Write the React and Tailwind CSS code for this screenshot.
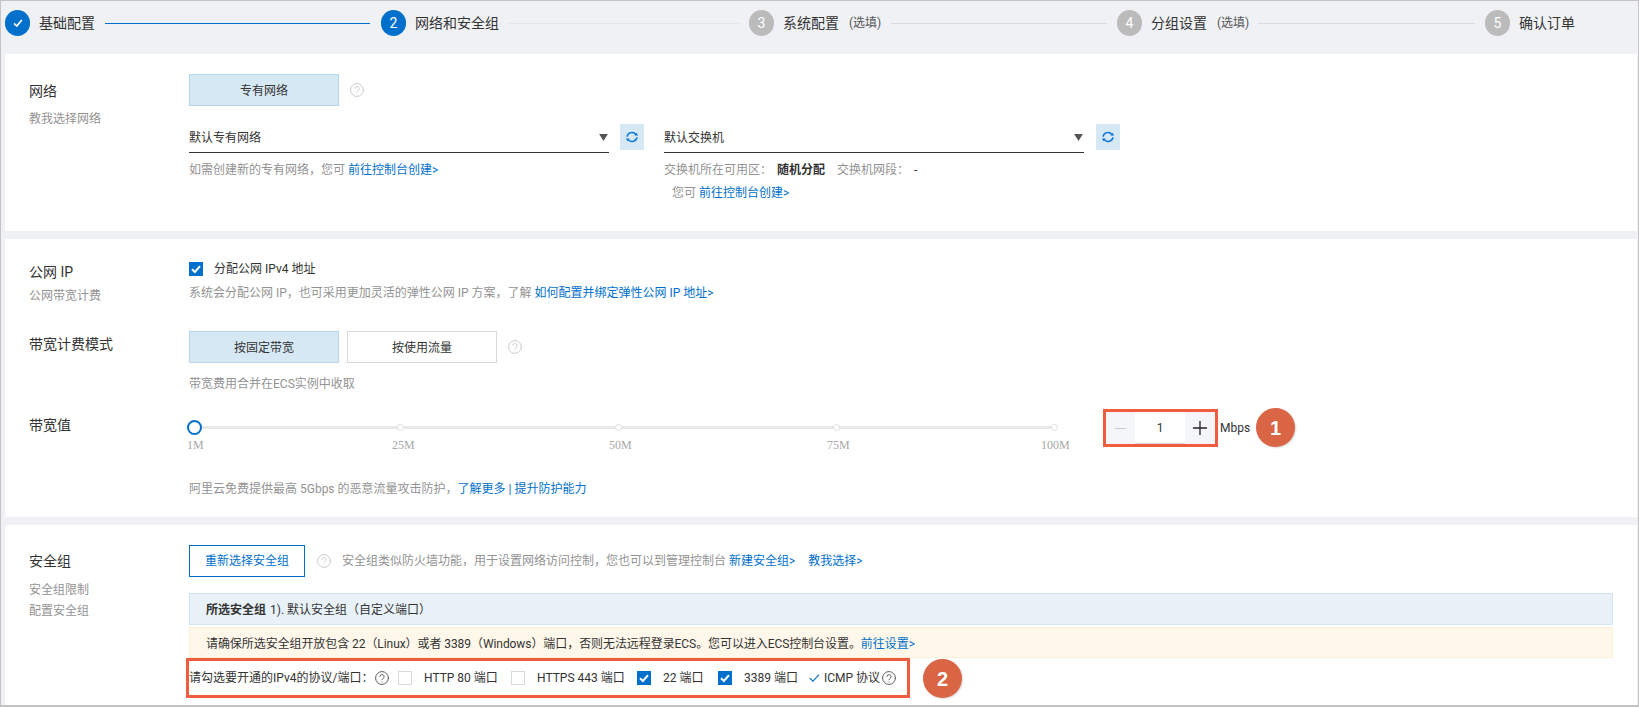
import React from "react";

const FONT = 'font-["Roboto","Noto_Sans_CJK_SC",sans-serif]';

function Help({ className = "text-[#c8c8c8]" }) {
  return (
    <svg viewBox="0 0 24 24" width="14" height="14" fill="none" stroke="currentColor" strokeWidth="1.6" strokeLinecap="round" strokeLinejoin="round" className={`block shrink-0 ${className}`}>
      <circle cx="12" cy="12" r="11" />
      <path d="M8.4 9.2a3.6 3.6 0 0 1 7.2 1c0 2.4-3.6 2.8-3.6 4.8" />
      <path d="M12 18.6h.01" />
    </svg>
  );
}

function Refresh() {
  return (
    <button className="flex h-[26px] w-[24px] shrink-0 items-center justify-center bg-[#d7e8f5]">
      <svg viewBox="0 0 14 14" width="14" height="14" fill="none" stroke="#0b75d8" strokeWidth="1.5">
        <path d="M2 6.6A5 5 0 0 1 11 4.6" />
        <path d="M12 7.4A5 5 0 0 1 3 9.4" />
        <path d="M9.3 5.6H13.2L11.4 2.8Z" fill="#0b75d8" stroke="none" />
        <path d="M0.8 8.4H4.7L2.6 11.2Z" fill="#0b75d8" stroke="none" />
      </svg>
    </button>
  );
}

function Check({ checked }) {
  return checked ? (
    <span className="flex h-[14px] w-[14px] shrink-0 items-center justify-center bg-[#0070cc]">
      <svg viewBox="0 0 14 14" width="14" height="14" fill="none" stroke="#fff" strokeWidth="2">
        <path d="M3 7.2 5.9 10 11 4.2" />
      </svg>
    </span>
  ) : (
    <span className="block h-[14px] w-[14px] shrink-0 border border-[#d9d9d9] bg-white" />
  );
}

function Step({ n, label, opt, state, lineClass, lineW, labelW }) {
  const circle = state === "gray" ? "bg-[#bbbbbb]" : "bg-[#0070cc]";
  return (
    <div className="flex shrink-0 items-center">
      <div className={`flex h-[26px] w-[25px] shrink-0 items-center justify-center rounded-full text-[14px] text-white ${circle}`}>
        {state === "done" ? (
          <svg viewBox="0 0 14 14" width="14" height="14" fill="none" stroke="#fff" strokeWidth="1.7">
            <path d="M3 7.4 5.8 10 10.8 4" />
          </svg>
        ) : (
          n
        )}
      </div>
      <div className={`ml-[9px] flex items-center text-[14px] text-[#333] ${labelW}`}>
        <span className="whitespace-nowrap">{label}</span>
        {opt && <span className="ml-[10px] whitespace-nowrap text-[12px] text-[#555]">(选填)</span>}
      </div>
      {lineW && <div className={`h-px ${lineW} ${lineClass}`} />}
    </div>
  );
}

function Label({ title, subs = [], top = "mt-0" }) {
  return (
    <div className={`w-[160px] shrink-0 ${top}`}>
      <div className="text-[14px] leading-[24px] text-[#333]">{title}</div>
      {subs.length > 0 && (
        <div className="mt-[3px] first:mt-0">
          {subs.map((s, i) => (
            <div key={s} className={`text-[12px] leading-[18px] text-[#939393] ${i ? "mt-[3px]" : ""}`}>{s}</div>
          ))}
        </div>
      )}
    </div>
  );
}

function ChoiceBtn({ active, children }) {
  return (
    <button className={`flex h-[32px] w-[150px] items-center justify-center border pt-px text-[12px] text-[#333] ${active ? "border-[#b6d5ee] bg-[#d7e8f5]" : "border-[#d9d9d9] bg-white"}`}>
      {children}
    </button>
  );
}

function Select({ text, w }) {
  return (
    <div className={`flex h-[29px] ${w} shrink-0 items-start justify-between border-b-[1.5px] border-[#333] pt-[5px] text-[12px] leading-[18px] text-[#333]`}>
      <span>{text}</span>
      <svg viewBox="0 0 10 8" width="9" height="7" className="mr-px mt-[5px]"><path d="M0 0h10L5 8Z" fill="#555" /></svg>
    </div>
  );
}

function Badge({ children, className = "" }) {
  return (
    <div className={`flex h-[39px] w-[39px] shrink-0 items-center justify-center rounded-full bg-[#d96545] font-['Liberation_Sans',sans-serif] text-[20px] font-bold text-white shadow-[1px_1px_2px_rgba(0,0,0,0.15)] ${className}`}>
      {children}
    </div>
  );
}

const A = ({ children, className = "" }) => <a className={`text-[#0070cc] ${className}`}>{children}</a>;

function Slider() {
  const marks = [
    { t: "1M", w: "w-[205px]" },
    { t: "25M", w: "w-[217px]" },
    { t: "50M", w: "w-[218px]" },
    { t: "75M", w: "w-[214px]" },
    { t: "100M", w: "w-[32px]" },
  ];
  return (
    <div className="w-[914px] shrink-0 pt-[13px]">
      <div className="relative h-[15px] w-[872px]">
        <div className="absolute left-[6px] top-[5px] h-[3px] w-[860px] bg-[#e8e8e8]" />
        <div className="absolute -left-[2px] -top-px h-[15px] w-[15px] rounded-full border-2 border-[#0070cc] bg-white" />
        <div className="absolute left-[208px] top-[3px] h-[7px] w-[7px] rounded-full border border-[#dedede] bg-white" />
        <div className="absolute left-[426px] top-[3px] h-[7px] w-[7px] rounded-full border border-[#dedede] bg-white" />
        <div className="absolute left-[644px] top-[3px] h-[7px] w-[7px] rounded-full border border-[#dedede] bg-white" />
        <div className="absolute left-[862px] top-[3px] h-[7px] w-[7px] rounded-full border border-[#dedede] bg-white" />
      </div>
      <div className="mt-px flex font-['Liberation_Serif',serif] text-[12px] leading-[16px] text-[#a8a8a8] -ml-[2px]">
        {marks.map((m) => (
          <span key={m.t} className={`${m.w} shrink-0 whitespace-nowrap`}>{m.t}</span>
        ))}
      </div>
    </div>
  );
}

function Stepper() {
  return (
    <div className="mt-px flex h-[38px] w-[115px] shrink-0 border-[3px] border-[#f05c3e]">
      <div className="flex w-[29px] items-center justify-center bg-[#f5f6fa]">
        <span className="h-px w-[11px] bg-[#c9c9c9]" />
      </div>
      <div className="flex w-[50px] items-center justify-center border-b border-[#d9d9d9] text-[12px] text-[#333]">1</div>
      <div className="relative flex w-[30px] items-center justify-center bg-[#f5f6fa]">
        <svg viewBox="0 0 14 14" width="14" height="14" stroke="#222" strokeWidth="1.3"><path d="M7 0v14M0 7h14" /></svg>
      </div>
    </div>
  );
}

export default function App() {
  return (
    <div className={`h-[707px] w-[1639px] overflow-hidden border-x border-t border-b-2 border-[#c4c4c4] bg-[#eff1f5] ${FONT}`}>
      {/* steps */}
      <div className="flex h-[53px] items-start pl-[4px] pt-[9px]">
        <Step n="1" label="基础配置" state="done" labelW="w-[66px]" lineW="w-[265px]" lineClass="bg-[#0070cc]" />
        <div className="w-[11px]" />
        <Step n="2" label="网络和安全组" state="active" labelW="w-[94px]" lineW="w-[230px]" lineClass="bg-[#e3e5ea]" />
        <div className="w-[10px]" />
        <Step n="3" label="系统配置" opt state="gray" labelW="w-[108px]" lineW="w-[216px]" lineClass="bg-[#d9dbe0]" />
        <div className="w-[10px]" />
        <Step n="4" label="分组设置" opt state="gray" labelW="w-[107px]" lineW="w-[217px]" lineClass="bg-[#d9dbe0]" />
        <div className="w-[10px]" />
        <Step n="5" label="确认订单" state="gray" labelW="w-[66px]" />
      </div>

      {/* network */}
      <section className="ml-[4px] mr-px flex h-[177px] bg-white pl-[24px] pt-[20px]">
        <div className="w-[160px] shrink-0 pt-[5px]">
          <div className="text-[14px] leading-[24px] text-[#333]">网络</div>
          <div className="mt-[7px] text-[12px] leading-[18px] text-[#939393]">教我选择网络</div>
        </div>
        <div>
          <div className="flex items-center">
            <ChoiceBtn active>专有网络</ChoiceBtn>
            <span className="ml-[11px]"><Help /></span>
          </div>
          <div className="mt-[18px] flex items-start">
            <div className="w-[475px] shrink-0">
              <div className="flex items-start">
                <Select text="默认专有网络" w="w-[420px]" />
                <span className="ml-[11px]"><Refresh /></span>
              </div>
              <div className="mt-[8px] text-[12px] leading-[18px] text-[#939393]">
                如需创建新的专有网络，您可 <A>前往控制台创建&gt;</A>
              </div>
            </div>
            <div>
              <div className="flex items-start">
                <Select text="默认交换机" w="w-[420px]" />
                <span className="ml-[12px]"><Refresh /></span>
              </div>
              <div className="mt-[8px] flex text-[12px] leading-[18px] text-[#939393]">
                <span className="w-[113px]">交换机所在可用区：</span>
                <span className="w-[60px] font-bold text-[#333]">随机分配</span>
                <span className="w-[77px]">交换机网段：</span>
                <span className="text-[#333]">-</span>
              </div>
              <div className="ml-[8px] mt-[5px] text-[12px] leading-[18px] text-[#939393]">
                您可 <A>前往控制台创建&gt;</A>
              </div>
            </div>
          </div>
        </div>
      </section>

      {/* public ip */}
      <section className="ml-[4px] mr-px mt-[8px] h-[278px] bg-white pl-[24px] pt-[21px]">
        <div className="flex h-[45px]">
          <Label title="公网 IP" subs={["公网带宽计费"]} />
          <div>
            <div className="flex h-[18px] items-center">
              <Check checked />
              <span className="ml-[11px] text-[12px] text-[#333]">分配公网 IPv4 地址</span>
            </div>
            <div className="mt-[6px] text-[12px] leading-[18px] text-[#939393]">
              系统会分配公网 IP，也可采用更加灵活的弹性公网 IP 方案，了解 <A>如何配置并绑定弹性公网 IP 地址&gt;</A>
            </div>
          </div>
        </div>
        <div className="mt-[26px] flex">
          <Label title="带宽计费模式" top="mt-px" />
          <div>
            <div className="flex items-center">
              <ChoiceBtn active>按固定带宽</ChoiceBtn>
              <span className="ml-[8px]"><ChoiceBtn>按使用流量</ChoiceBtn></span>
              <span className="ml-[11px]"><Help /></span>
            </div>
            <div className="mt-[12px] text-[12px] leading-[18px] text-[#939393]">带宽费用合并在ECS实例中收取</div>
          </div>
        </div>
        <div className="mt-[15px] flex">
          <Label title="带宽值" top="mt-[5px]" />
          <div>
            <div className="flex items-start">
              <Slider />
              <Stepper />
              <span className="ml-[2px] mt-[11px] text-[12px] leading-[18px] text-[#333]">Mbps</span>
              <Badge className="ml-[6px]">1</Badge>
            </div>
            <div className="mt-[27px] text-[12px] leading-[18px] text-[#939393]">
              阿里云免费提供最高 5Gbps 的恶意流量攻击防护，<A>了解更多 | 提升防护能力</A>
            </div>
          </div>
        </div>
      </section>

      {/* security group */}
      <section className="ml-[4px] mr-px mt-[8px] flex h-[180px] bg-white pl-[24px] pt-[20px]">
        <div className="w-[160px] shrink-0 pt-[4px]">
          <div className="text-[14px] leading-[24px] text-[#333]">安全组</div>
          <div className="mt-[8px] text-[12px] leading-[18px] text-[#939393]">安全组限制</div>
          <div className="mt-[3px] text-[12px] leading-[18px] text-[#939393]">配置安全组</div>
        </div>
        <div className="w-[1424px] shrink-0">
          <div className="flex items-center text-[12px]">
            <button className="h-[32px] w-[116px] border border-[#0070cc] text-[#0070cc]">重新选择安全组</button>
            <span className="ml-[12px]"><Help /></span>
            <span className="ml-[11px] whitespace-nowrap text-[#939393]">
              安全组类似防火墙功能，用于设置网络访问控制，您也可以到管理控制台 <A>新建安全组&gt;</A>
              <A className="ml-[13px]">教我选择&gt;</A>
            </span>
          </div>
          <div className="mt-[16px] flex h-[32px] items-center border border-[#d3e4f3] bg-[#e9f1f9] pl-[16px] pt-px text-[12px] text-[#333]">
            <b className="font-bold">所选安全组</b>
            <span className="ml-[4px]">1). 默认安全组（自定义端口）</span>
          </div>
          <div className="mt-[2px] flex h-[31px] items-center border border-[#fcefd6] bg-[#fff8ea] pl-[16px] pt-[3px] text-[12px] text-[#333]">
            <span className="tracking-[-0.07px]">请确保所选安全组开放包含 22（Linux）或者 3389（Windows）端口，否则无法远程登录ECS。您可以进入ECS控制台设置。</span>
            <A>前往设置&gt;</A>
          </div>
          <div className="flex items-center">
            <div className="-ml-[3px] flex h-[40px] w-[724px] shrink-0 items-center border-[3px] border-[#f05c3e] text-[12px] text-[#333]">
              <span className="w-[186px] shrink-0 whitespace-nowrap">请勾选要开通的IPv4的协议/端口：</span>
              <Help className="text-[#555]" />
              <span className="ml-[9px]"><Check /></span>
              <span className="ml-[12px] w-[87px] shrink-0 whitespace-nowrap">HTTP 80 端口</span>
              <Check />
              <span className="ml-[12px] w-[100px] shrink-0 whitespace-nowrap">HTTPS 443 端口</span>
              <Check checked />
              <span className="ml-[12px] w-[55px] shrink-0 whitespace-nowrap">22 端口</span>
              <Check checked />
              <span className="ml-[12px] w-[65px] shrink-0 whitespace-nowrap">3389 端口</span>
              <svg viewBox="0 0 12 10" width="11" height="10" fill="none" stroke="#0070cc" strokeWidth="1.3" className="shrink-0"><path d="M1 5.2 4.2 8.4 11 1.4" /></svg>
              <span className="ml-[4px] w-[58px] shrink-0 whitespace-nowrap">ICMP 协议</span>
              <Help className="text-[#555]" />
            </div>
            <Badge className="ml-[13px] mt-px">2</Badge>
          </div>
        </div>
      </section>
    </div>
  );
}
